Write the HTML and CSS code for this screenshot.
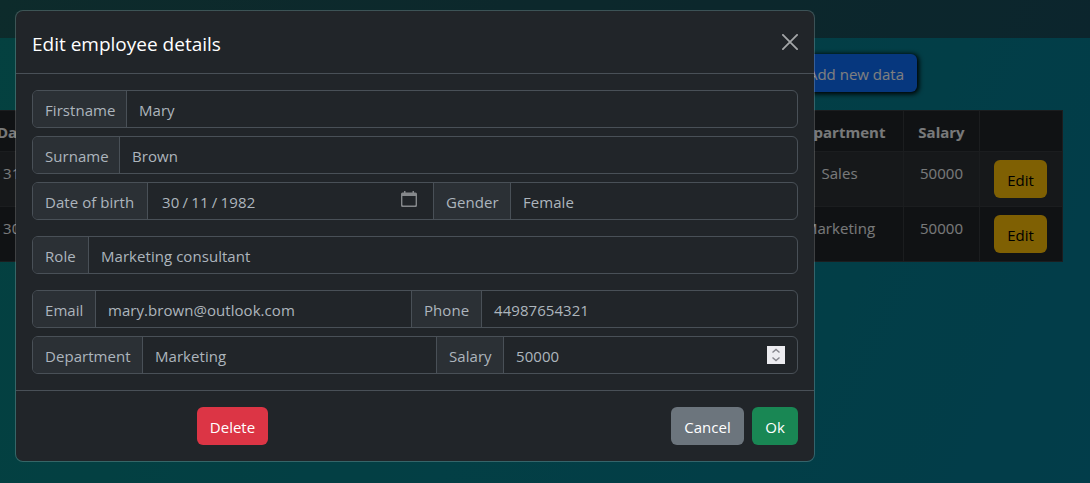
FILE: index.html
```html
<!DOCTYPE html>
<html lang="en">
<head>
<meta charset="utf-8">
<title>Employees</title>
<link rel="stylesheet" href="styles.css">
</head>
<body>
<div class="page">
  <header class="navbar"></header>
  <div class="toolbar"><button class="btn btn-primary">Add new data</button></div>
  <table class="employees">
    <colgroup><col class="col-date"><col class="col-dept"><col class="col-salary"><col class="col-action"></colgroup>
    <thead><tr><th class="date head-date">Date of birth</th><th>Department</th><th>Salary</th><th></th></tr></thead>
    <tbody>
      <tr class="striped"><td class="date">31/01/1990</td><td>Sales</td><td>50000</td><td><button class="btn btn-warning">Edit</button></td></tr>
      <tr><td class="date">30/11/1982</td><td>Marketing</td><td>50000</td><td><button class="btn btn-warning">Edit</button></td></tr>
    </tbody>
  </table>
</div>
<div class="backdrop"></div>
<section class="modal" role="dialog">
  <header class="modal-header">
    <h1 class="modal-title">Edit employee details</h1>
    <svg class="close" viewBox="0 0 16 16"><path d="M.9.9l14.200 14.200M15.100.9L.9 15.100"/></svg>
  </header>
  <div class="modal-body">
    <div class="group"><span class="label w-first">Firstname</span><span class="field">Mary</span></div>
    <div class="group"><span class="label w-sur">Surname</span><span class="field">Brown</span></div>
    <div class="group">
      <span class="label w-birth">Date of birth</span>
      <span class="field date-field"><span class="date-value"><span>30</span><span>/</span><span>11</span><span>/</span><span>1982</span></span>
        <svg class="calendar" viewBox="0 0 16 16"><path fill-rule="evenodd" d="M3 0h1.500v1.500h7V0H13v1.500h1.500A1.500 1.500 0 0 1 16 3v11.500a1.500 1.500 0 0 1-1.500 1.500h-13A1.500 1.500 0 0 1 0 14.500V3a1.500 1.500 0 0 1 1.500-1.500H3zM1.400 5v8.800c0 .5.300.8.8.8h11.600c.5 0 .8-.3.8-.8V5z"/></svg>
      </span>
      <span class="label w-gender">Gender</span><span class="field">Female</span>
    </div>
    <div class="group spaced"><span class="label w-role">Role</span><span class="field">Marketing consultant</span></div>
    <div class="group spaced">
      <span class="label w-email">Email</span><span class="field">mary.brown@outlook.com</span>
      <span class="label w-phone">Phone</span><span class="field">44987654321</span>
    </div>
    <div class="group">
      <span class="label w-dept">Department</span><span class="field">Marketing</span>
      <span class="label w-salary">Salary</span>
      <span class="field salary-field">50000
        <svg class="spinner" viewBox="0 0 18 18"><path d="M5.500 6.500L9 3.500l3.500 3M5.500 11.500L9 14.500l3.500-3"/></svg>
      </span>
    </div>
  </div>
  <footer class="modal-footer">
    <button class="btn btn-danger">Delete</button>
    <button class="btn btn-secondary">Cancel</button>
    <button class="btn btn-success">Ok</button>
  </footer>
</section>
</body>
</html>
```
FILE: styles.css
```css
* { box-sizing: border-box; }
body {
  margin: 0;
  height: 483px;
  overflow: hidden;
  font: 15px/24px "Open Sans", "Noto Sans", sans-serif;
  letter-spacing: .05px;
  color: #adb5bd;
}
.page {
  height: 483px;
  overflow: hidden;
  background: linear-gradient(115deg, #088280, #047a94);
}
.navbar { height: 38px; background: linear-gradient(115deg, #1a5657, #184b5a); }
.toolbar { display: flex; justify-content: flex-end; padding: 16px 173px 18px 0; }
.btn {
  height: 38px;
  padding: 2px 0 0;
  border: 0;
  border-radius: 6px;
  font: inherit;
  color: #fff;
}
.btn-primary { width: 122px; background: #0d6efd; color: #fff; box-shadow: 1px 1px 5px 1px #000; }
.btn-warning { width: 53px; background: #ffc107; color: #000; }
.btn-danger { width: 71px; background: #dc3545; margin-right: auto; }
.btn-secondary { width: 73px; background: #6c757d; }
.btn-success { width: 46px; background: #198754; }

.employees {
  width: 1079px;
  margin-left: -16px;
  table-layout: fixed;
  border-collapse: collapse;
  background: #212529;
  color: #f1f3f5;
  text-align: center;
}
.col-date { width: 791px; }
.col-dept { width: 128px; }
.col-salary { width: 76px; }
.col-action { width: 83px; }
.employees th, .employees td { padding: 8px 0; border: 1px solid #373b3e; vertical-align: top; }
.employees th { height: 41px; line-height: 26px; padding: 8px 0 6px; letter-spacing: 0; }
.employees td { height: 55px; line-height: 26px; }
.employees td .btn { display: block; margin: 0 0 0 14px; }
.striped { background: #2c3034; }
.employees .date { padding-left: 18px; text-align: left; }
.employees .head-date { padding-left: 12px; }

.backdrop { position: absolute; inset: 0; background: rgba(0, 0, 0, .5); }

.modal {
  position: absolute;
  top: 10px;
  left: 15px;
  width: 800px;
  height: 452px;
  border: 1px solid rgba(255, 255, 255, .2);
  border-radius: 8px;
  background: #212529;
  background-clip: padding-box;
}
.modal-header {
  display: flex;
  align-items: center;
  justify-content: space-between;
  height: 63px;
  padding: 4px 16px 0;
  border-bottom: 1px solid #495057;
}
.modal-title { margin: 0; font-size: 19px; line-height: 30px; font-weight: 400; letter-spacing: 0; color: #fff; }
.close { width: 16px; height: 16px; margin-top: -4px; fill: none; stroke: #a4a6a8; stroke-width: 1.8; stroke-linecap: round; }
.modal-body { display: flex; flex-direction: column; gap: 8px; height: 316px; padding: 16px; }
.group { display: flex; height: 38px; border: 1px solid #495057; border-radius: 6px; overflow: hidden; }
.spaced { margin-top: 8px; }
.label {
  flex: none;
  padding: 7px 0 0 12px;
  border-right: 1px solid #495057;
  background: #2b3035;
  white-space: nowrap;
}
.field { flex: 1; padding: 7px 12px 0; white-space: nowrap; }
.field + .label { border-left: 1px solid #495057; }
.w-first { width: 94px; }
.w-sur { width: 87px; }
.w-birth { width: 115px; }
.w-gender { width: 78px; }
.w-role { width: 56px; }
.w-email { width: 63px; }
.w-phone { width: 71px; }
.w-dept { width: 110px; }
.w-salary { width: 68px; }
.date-field, .salary-field { display: flex; justify-content: space-between; }
.date-field { flex: none; width: 285px; padding: 7px 16px 0 14px; }
.date-value { display: flex; gap: 3px; letter-spacing: .2px; }
.calendar { width: 16px; height: 16px; margin-top: 1px; fill: #85888b; }
.spinner { width: 18px; height: 18px; margin-top: 2px; background: #ececf0; fill: none; stroke: #85858c; stroke-width: 1.4; }
.modal-footer {
  display: flex;
  gap: 8px;
  padding: 16px 16px 0 181px;
  border-top: 1px solid #495057;
}
```
